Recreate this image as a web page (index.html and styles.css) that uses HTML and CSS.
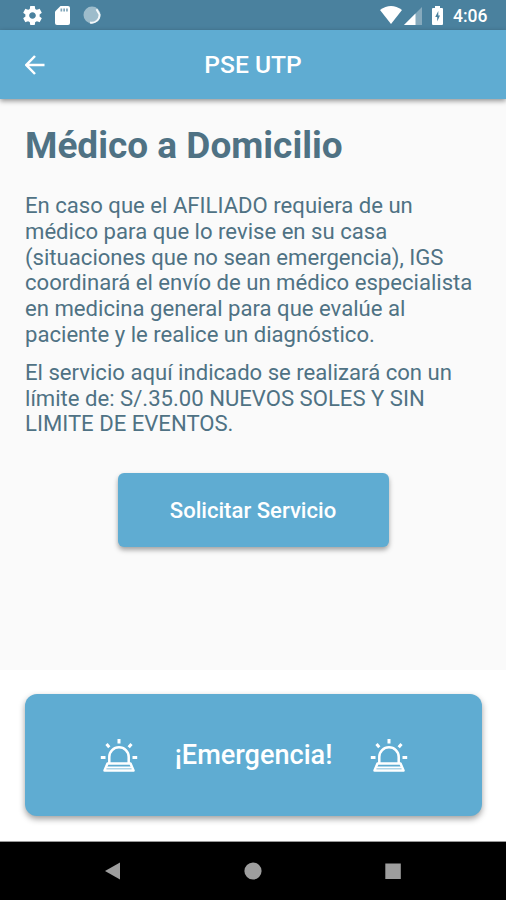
FILE: index.html
```html
<!DOCTYPE html>
<html lang="es">
<head>
<meta charset="utf-8">
<title>PSE UTP</title>
<link rel="stylesheet" href="styles.css">
</head>
<body>
<svg class="defs" width="0" height="0" aria-hidden="true">
  <symbol id="siren" viewBox="0 0 38 34">
    <g fill="none" stroke="#fff" stroke-width="2.5" stroke-linejoin="round">
      <path d="M9.300 25V19a9.700 9.700 0 0 1 19.400 0v6M7.500 25.500h23l3 7h-29z"/>
      <path stroke-width="2" d="M7 29.500h24"/>
      <path stroke-width="3" d="M19 1v4.500M6.500 6l2.800 3.200M31.500 6l-2.800 3.200M.8 19.500h4.700M32.500 19.500h4.700"/>
    </g>
  </symbol>
</svg>
<div class="phone">
  <div class="status">
    <svg class="gear" viewBox="2 2 20 20"><path fill="#fff" d="M19.43 12.98c.04-.32.07-.64.07-.98s-.03-.66-.07-.98l2.110-1.650c.19-.15.24-.42.12-.64l-2-3.460c-.12-.22-.39-.3-.61-.22l-2.490 1c-.52-.4-1.080-.73-1.690-.98l-.38-2.650C14.460 2.180 14.250 2 14 2h-4c-.25 0-.46.18-.49.42l-.38 2.650c-.61.25-1.170.59-1.690.98l-2.490-1c-.23-.09-.49 0-.61.22l-2 3.460c-.13.22-.07.49.12.64l2.110 1.650c-.04.32-.07.65-.07.98s.03.66.07.98l-2.110 1.650c-.19.15-.24.42-.12.64l2 3.460c.12.22.39.3.61.22l2.490-1c.52.4 1.080.73 1.690.98l.38 2.650c.03.24.24.42.49.42h4c.25 0 .46-.18.49-.42l.38-2.650c.61-.25 1.170-.59 1.690-.98l2.490 1c.23.09.49 0 .61-.22l2-3.460c.12-.22.07-.49-.12-.64l-2.110-1.650zM12 15.500c-1.930 0-3.500-1.570-3.500-3.500s1.570-3.500 3.500-3.500 3.500 1.570 3.500 3.500-1.570 3.500-3.500 3.500z"/></svg>
    <svg class="sd" viewBox="0 0 15 19"><path fill="#fff" d="M5.500 0H13a2 2 0 0 1 2 2v15a2 2 0 0 1-2 2H2a2 2 0 0 1-2-2V5.500z"/><path fill="#7fa5b9" d="M5.500 2.500h1.700v3H5.500zM8.300 2.500H10v3H8.300zM11.100 2.500h1.700v3h-1.700z"/></svg>
    <svg class="sync" viewBox="0 0 18 18"><circle cx="9" cy="9" r="8.500" fill="#9dbccb"/><path d="M13.500 3.200L16.500 8.500A7.800 7.800 0 0 1 7 16.500" fill="none" stroke="#f4f8fa" stroke-width="1.900"/></svg>
    <span class="spacer"></span>
    <svg class="wifi" viewBox="0 0 22 18"><path fill="#fff" d="M0 4Q11-4 22 4L11 18z"/></svg>
    <svg class="signal" viewBox="0 0 18 18"><path fill="#86aabd" d="M18 0v18H0z"/><path fill="#fff" d="M11.500 6.500V18H0z"/></svg>
    <svg class="battery" viewBox="0 0 11 19"><path fill="#fff" d="M3 0h5v2h2a1 1 0 0 1 1 1v15a1 1 0 0 1-1 1H1a1 1 0 0 1-1-1V3a1 1 0 0 1 1-1h2z"/><path fill="#4a819e" d="M6.300 5L3.200 11H5.200v4.500l2.800-6H6.300z"/></svg>
    <span class="clock">4:06</span>
  </div>
  <header class="appbar">
    <svg class="back" viewBox="0 0 20 20"><path d="M19.500 10H1.500M10 1L1.300 10l8.700 9" fill="none" stroke="#fff" stroke-width="2.500"/></svg>
    <h1 class="title">PSE UTP</h1>
  </header>
  <main class="content">
    <h2 class="heading">Médico a Domicilio</h2>
    <p class="text">En caso que el AFILIADO requiera de un<br>médico para que lo revise en su casa<br>(situaciones que no sean emergencia), IGS<br>coordinará el envío de un médico especialista<br>en medicina general para que evalúe al<br>paciente y le realice un diagnóstico.</p>
    <p class="text">El servicio aquí indicado se realizará con un<br>límite de: S/.35.00 NUEVOS SOLES Y SIN<br>LIMITE DE EVENTOS.</p>
    <button class="request">Solicitar Servicio</button>
  </main>
  <footer class="bottom">
    <button class="emergency">
      <svg class="siren"><use href="#siren"/></svg>
      <span class="label">¡Emergencia!</span>
      <svg class="siren"><use href="#siren"/></svg>
    </button>
  </footer>
  <nav class="nav">
    <svg viewBox="0 0 18 18"><path fill="#9e9e9e" d="M16 .5v17L1 9z"/></svg>
    <svg viewBox="0 0 18 18"><circle cx="9" cy="9" r="8.600" fill="#9e9e9e"/></svg>
    <svg viewBox="0 0 18 18"><path fill="#9e9e9e" d="M1.300 1.500h15.500V17H1.300z"/></svg>
  </nav>
</div>
</body>
</html>
```
FILE: styles.css
```css
* { box-sizing: border-box; }
body { margin: 0; font-family: Roboto, sans-serif; }
.defs { position: absolute; }
.phone { width: 506px; height: 900px; display: flex; flex-direction: column; background: #fafafa; overflow: hidden; }
svg { flex: none; display: block; }
button { border: 0; font-family: inherit; color: #fff; background: #5facd2; }

.status { height: 30px; background: #4a819e; display: flex; align-items: center; padding: 0 19px 0 23px; }
.gear { width: 19px; height: 19px; }
.sd { width: 15px; height: 19px; margin-left: 13px; }
.sync { width: 18px; height: 18px; margin-left: 13px; }
.spacer { flex: 1; }
.wifi { width: 22px; height: 18px; }
.signal { width: 18px; height: 18px; margin: 1px 0 0 2px; }
.battery { width: 11px; height: 19px; margin-left: 10px; }
.clock { width: 35px; margin-left: 10px; margin-right: -1px; color: #fff; font-size: 17.5px; font-weight: 500; line-height: 30px; white-space: nowrap; padding-top: 2px; }

.appbar { height: 69px; background: #5facd2; display: grid; grid-template-columns: 70px 1fr 70px; align-items: center; box-shadow: 0 2px 5px rgba(0, 0, 0, .42); }
.back { width: 20px; height: 20px; margin-left: 25px; }
.title { margin: 1px 0 0; color: #fff; font-size: 24.6px; font-weight: 500; line-height: 30px; text-align: center; }

.content { height: 571px; padding: 25px 25px 0; color: #4f7284; }
.heading { margin: 0 0 25px; font-size: 37px; line-height: 44px; font-weight: 700; white-space: nowrap; }
.text { margin: 0 0 12px; font-size: 22.12px; line-height: 25.8px; font-weight: 400; white-space: nowrap; }
.request { display: block; width: 271px; height: 74px; margin: 36px auto 0; border-radius: 6px; font-size: 22.1px; font-weight: 500; box-shadow: 0 3px 5px rgba(0, 0, 0, .35); }

.bottom { height: 172px; padding: 24px 24px 0 25px; background: #fff; border-bottom: 1px solid #999; }
.emergency { width: 457px; height: 122px; display: flex; align-items: center; justify-content: center; border-radius: 12px; padding: 0; box-shadow: 0 3px 6px rgba(0, 0, 0, .38); }
.siren { width: 38px; height: 34px; }
.label { width: 232px; font-size: 27.1px; font-weight: 500; white-space: nowrap; text-align: center; }

.nav { flex: 1; background: #000; display: flex; justify-content: center; align-items: center; gap: 122px; }
.nav svg { width: 18px; height: 18px; }
```
